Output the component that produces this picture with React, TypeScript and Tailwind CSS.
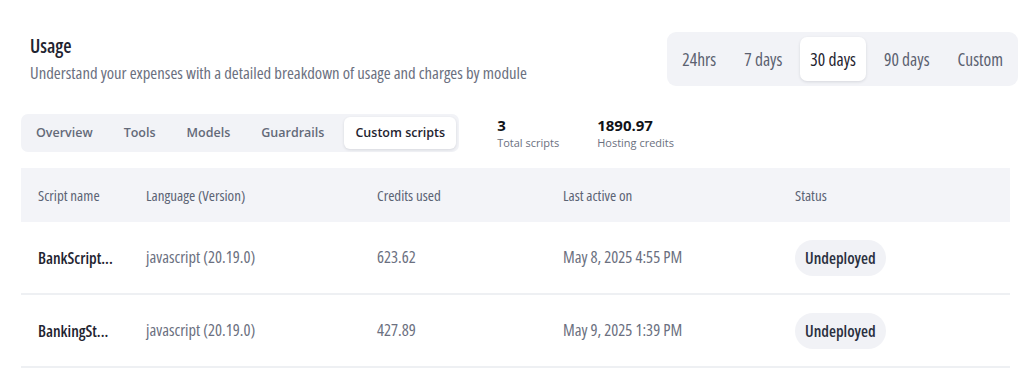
const periods = ['24hrs', '7 days', '30 days', '90 days', 'Custom'];
const tabs = ['Overview', 'Tools', 'Models', 'Guardrails', 'Custom scripts'];

const rows = [
  { name: 'BankScript...', language: 'javascript (20.19.0)', credits: '623.62', lastActive: 'May 8, 2025 4:55 PM', status: 'Undeployed' },
  { name: 'BankingSt...', language: 'javascript (20.19.0)', credits: '427.89', lastActive: 'May 9, 2025 1:39 PM', status: 'Undeployed' },
];

const cols = 'grid grid-cols-[108px_231px_186px_232px_1fr]';

export default function App() {
  const activePeriod = '30 days';
  const activeTab = 'Custom scripts';

  return (
    <div className="h-[371px] w-[1034px] overflow-hidden whitespace-nowrap bg-white font-['Open_Sans',sans-serif] font-stretch-[80%] text-[#1f2430]">
      <div className="flex items-center justify-between pl-[30px] pr-4 pt-8">
        <div>
          <h1 className="text-[19px] leading-6 font-semibold text-[#1f2430]">Usage</h1>
          <p className="mt-1 text-[16.7px] leading-[22px] text-[#6b7080]">
            Understand your expenses with a detailed breakdown of usage and charges by module
          </p>
        </div>

        <div className="flex items-center gap-2 rounded-[9px] bg-[#f2f3f7] p-[5px]">
          {periods.map((p) => (
            <button
              key={p}
              className={
                p === activePeriod
                  ? 'h-11 rounded-[7px] bg-white px-[10px] text-[17.5px] font-medium text-[#1f2430] shadow-[0_1px_3px_rgba(20,24,40,0.12)]'
                  : 'h-11 rounded-[7px] px-[10px] text-[17.5px] font-medium text-[#5b6170]'
              }
            >
              {p}
            </button>
          ))}
        </div>
      </div>

      <div className="mt-7 flex items-center pl-[21px]">
        <div className="flex items-center gap-[9px] rounded-[7px] bg-[#f2f3f7] p-[3px] pl-1 font-stretch-normal">
          {tabs.map((t) => (
            <button
              key={t}
              className={
                t === activeTab
                  ? 'h-8 rounded-[6px] bg-white px-[11px] text-[12.5px] font-semibold text-[#1f2430] shadow-[0_1px_3px_rgba(20,24,40,0.12)]'
                  : 'h-8 rounded-[6px] px-[11px] text-[12.5px] font-semibold text-[#646a79]'
              }
            >
              {t}
            </button>
          ))}
        </div>

        <div className="ml-[38px] flex gap-[38px] font-stretch-normal">
          <Stat value="3" label="Total scripts" />
          <Stat value="1890.97" label="Hosting credits" />
        </div>
      </div>

      <div className="mt-4 ml-[21px] w-[989px]">
        <div className={`${cols} h-[54px] items-center bg-[#f3f4f8] text-[15px] text-[#5b6374]`}>
          <div className="pl-[17px]">Script name</div>
          <div className="pl-[17px]">Language (Version)</div>
          <div className="pl-[17px]">Credits used</div>
          <div className="pl-[17px]">Last active on</div>
          <div className="pl-[17px]">Status</div>
        </div>

        {rows.map((r) => (
          <div key={r.name} className={`${cols} h-[73px] items-center border-b-2 border-[#eef0f3] text-[16.5px]`}>
            <div className="pl-[17px] text-[16px] font-semibold text-[#1f2430]">{r.name}</div>
            <div className="pl-[17px] text-[#6b7080]">{r.language}</div>
            <div className="pl-[17px] text-[#6b7080]">{r.credits}</div>
            <div className="pl-[17px] text-[#6b7080]">{r.lastActive}</div>
            <div className="pl-[17px]">
              <span className="inline-flex h-9 items-center rounded-full bg-[#f1f2f6] px-[10px] text-[16px] font-semibold text-[#2a3040]">
                {r.status}
              </span>
            </div>
          </div>
        ))}
      </div>
    </div>
  );
}

function Stat({ value, label }: { value: string; label: string }) {
  return (
    <div className="flex flex-col">
      <span className="text-[15px] leading-5 font-bold text-[#111318]">{value}</span>
      <span className="text-[11px] leading-4 text-[#6b7080]">{label}</span>
    </div>
  );
}
